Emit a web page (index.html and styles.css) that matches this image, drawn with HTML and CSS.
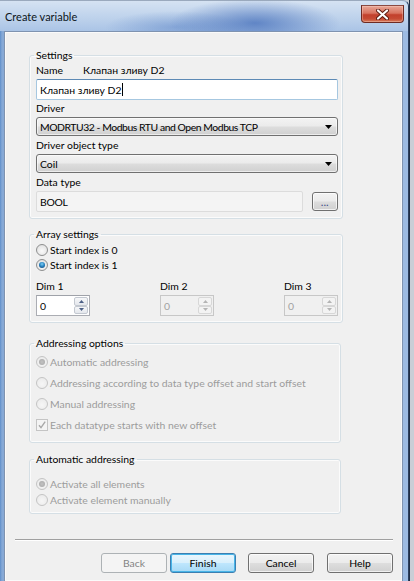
FILE: index.html
```html
<!DOCTYPE html>
<html lang="en">
<head>
<meta charset="utf-8">
<title>Create variable</title>
<link rel="stylesheet" href="styles.css">
</head>
<body>
<div class="window">
  <div class="titlebar">
    <span class="title">Create variable</span>
    <span class="close" aria-label="Close">
      <svg width="13" height="11" viewBox="0 0 13 11"><path d="M2 1.5 L11 9.5 M11 1.5 L2 9.5" stroke="#5a1a10" stroke-width="4" stroke-linecap="round"/><path d="M2 1.5 L11 9.5 M11 1.5 L2 9.5" stroke="#fff" stroke-width="2.2" stroke-linecap="round"/></svg>
    </span>
  </div>
  <div class="client">
    <fieldset class="group g-settings">
      <legend>Settings</legend>
      <div class="name-row"><span class="name-lbl">Name</span><span>Клапан зливу D2</span></div>
      <div class="textbox">Клапан зливу D2<span class="caret"></span></div>
      <div class="lbl">Driver</div>
      <div class="combo"><span class="combo-text caps">MODRTU32 - Modbus RTU and Open Modbus TCP</span><svg width="7" height="4" viewBox="0 0 7 4"><path d="M0 0 H7 L3.5 4 Z" fill="#000"/></svg></div>
      <div class="lbl">Driver object type</div>
      <div class="combo"><span class="combo-text">Coil</span><svg width="7" height="4" viewBox="0 0 7 4"><path d="M0 0 H7 L3.5 4 Z" fill="#000"/></svg></div>
      <div class="lbl">Data type</div>
      <div class="data-row">
        <div class="readonly">BOOL</div>
        <div class="btn dots">...</div>
      </div>
    </fieldset>

    <fieldset class="group g-array">
      <legend>Array settings</legend>
      <div class="opt"><span class="radio"></span>Start index is 0</div>
      <div class="opt"><span class="radio on"></span>Start index is 1</div>
      <div class="dims">
        <div class="dim">
          <div class="lbl">Dim 1</div>
          <div class="spin"><span class="spin-val">0</span><span class="spin-btns"><span class="sb"><svg width="5" height="3" viewBox="0 0 5 3"><path d="M0 3 H5 L2.5 0 Z"/></svg></span><span class="sb"><svg width="5" height="3" viewBox="0 0 5 3"><path d="M0 0 H5 L2.5 3 Z"/></svg></span></span></div>
        </div>
        <div class="dim">
          <div class="lbl">Dim 2</div>
          <div class="spin off"><span class="spin-val">0</span><span class="spin-btns"><span class="sb"><svg width="5" height="3" viewBox="0 0 5 3"><path d="M0 3 H5 L2.5 0 Z"/></svg></span><span class="sb"><svg width="5" height="3" viewBox="0 0 5 3"><path d="M0 0 H5 L2.5 3 Z"/></svg></span></span></div>
        </div>
        <div class="dim">
          <div class="lbl">Dim 3</div>
          <div class="spin off"><span class="spin-val">0</span><span class="spin-btns"><span class="sb"><svg width="5" height="3" viewBox="0 0 5 3"><path d="M0 3 H5 L2.5 0 Z"/></svg></span><span class="sb"><svg width="5" height="3" viewBox="0 0 5 3"><path d="M0 0 H5 L2.5 3 Z"/></svg></span></span></div>
        </div>
      </div>
    </fieldset>

    <fieldset class="group g-addr">
      <legend>Addressing options</legend>
      <div class="opt off"><span class="radio on"></span>Automatic addressing</div>
      <div class="opt off"><span class="radio"></span>Addressing according to data type offset and start offset</div>
      <div class="opt off"><span class="radio"></span>Manual addressing</div>
      <div class="opt off"><span class="check"><svg width="10" height="10" viewBox="0 0 10 10"><path d="M2 5.2 L4 7.6 L8.2 1.6" fill="none" stroke="#a8a8a8" stroke-width="1.4"/></svg></span>Each datatype starts with new offset</div>
    </fieldset>

    <fieldset class="group g-auto">
      <legend>Automatic addressing</legend>
      <div class="opt off"><span class="radio on"></span>Activate all elements</div>
      <div class="opt off"><span class="radio"></span>Activate element manually</div>
    </fieldset>

    <div class="separator"></div>

    <div class="buttons">
      <div class="btn wide disabled">Back</div>
      <div class="btn wide default">Finish</div>
      <div class="btn wide gap">Cancel</div>
      <div class="btn wide gap2">Help</div>
    </div>
  </div>
</div>
<div class="behind"></div>
</body>
</html>
```

FILE: styles.css
```css
* { box-sizing: border-box; }
html, body { margin: 0; padding: 0; }
body {
  width: 414px;
  height: 581px;
  overflow: hidden;
  display: flex;
  background: #cdd1d8;
  font-family: "Segoe UI", Lato, "Noto Sans", sans-serif;
  font-size: 10.4px;
  color: #000;
}

.window {
  width: 409px;
  height: 581px;
  flex: none;
  display: flex;
  flex-direction: column;
  background: linear-gradient(90deg, #5f8fcb 0, #86a9d6 2px, #9dbbe2 100%);
  border-right: 1px solid #2c3f5e;
  border-top: 1px solid #9aa9bd;
  border-top-right-radius: 6px;
}

.titlebar {
  height: 30px;
  flex: none;
  display: flex;
  justify-content: space-between;
  align-items: flex-start;
  border-top-right-radius: 6px;
  background:
    radial-gradient(ellipse 85px 24px at 255px 22px, rgba(50, 95, 178, 0.65), rgba(50, 95, 178, 0) 100%),
    radial-gradient(ellipse 70px 16px at 175px 26px, rgba(70, 115, 190, 0.4), rgba(70, 115, 190, 0) 100%),
    linear-gradient(#d5e2f2, #bcd1eb 60%, #aac4e6);
}
.title {
  margin: 9px 0 0 5px;
  font-size: 11px;
  line-height: 14px;
  color: #0c1420;
}
.close {
  margin: 4px 4px 0 0;
  width: 43px;
  height: 18px;
  display: flex;
  align-items: center;
  justify-content: center;
  border: 1px solid #6e2a22;
  border-top-color: #8a4a42;
  border-radius: 0 0 4px 4px;
  background: linear-gradient(#e8a797 0, #d8735f 45%, #c2402c 55%, #c64b34 80%, #d77d5d 100%);
  box-shadow: inset 0 0 0 1px rgba(255, 220, 210, 0.35);
}

.client {
  flex: 1;
  margin: 0 5px 0 4px;
  border: 1px solid #7f93b0;
  border-bottom: none;
  background: #f0f0f0;
  box-shadow: inset 0 0 0 1px #fafafa;
}

.group {
  margin: 0 0 0 24px;
  width: 314px;
  padding: 0 4px 0 6px;
  border: 1px solid #d5dfe5;
  border-radius: 3px;
  box-shadow: inset 0 0 0 1px #fbfbfb;
  min-width: 0;
}
.group legend {
  padding: 0 2px;
  margin-left: -2px;
  line-height: 14px;
  height: 14px;
}
.g-settings { margin-top: 16px; padding-bottom: 6px; }
.g-array { margin-top: 8px; padding-bottom: 6px; }
.g-addr { margin-top: 13px; width: 312px; padding-bottom: 7px; }
.g-auto { margin-top: 9px; width: 312px; padding-bottom: 5px; }

.lbl { height: 15px; line-height: 15px; }
.name-row { margin-top: 1px; height: 14px; line-height: 14px; display: flex; }
.name-lbl { width: 47px; }

.textbox {
  margin-top: 2px;
  height: 21px;
  display: flex;
  align-items: center;
  padding-left: 3px;
  background: #fff;
  border: 1px solid #a6c7e0;
  border-top-color: #5d8ab5;
  border-radius: 2px;
}
.caret { width: 1px; height: 13px; background: #000; margin-left: 1px; }

.g-settings .lbl { margin-top: 2px; }
.g-settings .textbox + .lbl { margin-top: 1px; }

.combo {
  margin-top: 1px;
  height: 19px;
  display: flex;
  align-items: center;
  justify-content: space-between;
  padding: 0 5px 0 3px;
  border: 1px solid #707070;
  border-radius: 3px;
  background: linear-gradient(#f3f3f3 0, #ebebeb 48%, #dddddd 52%, #d0d0d0 100%);
  box-shadow: inset 0 0 0 1px rgba(255, 255, 255, 0.6);
}
.combo-text.caps { letter-spacing: -0.45px; }

.data-row {
  margin-top: 1px;
  display: flex;
  align-items: center;
  gap: 9px;
}
.readonly {
  width: 267px;
  height: 21px;
  display: flex;
  align-items: center;
  padding-left: 3px;
  background: #f4f4f4;
  border: 1px solid #dcdcdc;
  border-radius: 2px;
  letter-spacing: -0.3px;
}

.btn {
  display: flex;
  align-items: center;
  justify-content: center;
  border: 1px solid #707070;
  border-radius: 3px;
  background: linear-gradient(#f3f3f3 0, #ebebeb 48%, #dddddd 52%, #d0d0d0 100%);
  box-shadow: inset 0 0 0 1px rgba(255, 255, 255, 0.7);
}
.dots {
  width: 26px;
  height: 19px;
  color: #3b4a8a;
  font-weight: bold;
  font-size: 9px;
  letter-spacing: 0.5px;
  padding-top: 2px;
}

.opt {
  height: 15px;
  display: flex;
  align-items: center;
  gap: 2px;
}
.g-array .opt:first-of-type { margin-top: 1px; }
.opt.off { color: #9c9c9c; }
.g-addr .opt { height: 21px; }
.g-addr .opt:first-of-type { margin-top: 1px; }
.g-auto .opt { height: 16px; }
.g-auto .opt:first-of-type { margin-top: 10px; }

.radio {
  width: 12px;
  height: 12px;
  border-radius: 50%;
  border: 1px solid #8e8f8f;
  background: radial-gradient(circle at 50% 60%, #fafafa 0, #e8e8e8 60%, #d4d4d4 100%);
  display: flex;
  align-items: center;
  justify-content: center;
  flex: none;
}
.radio.on::after {
  content: "";
  width: 6px;
  height: 6px;
  border-radius: 50%;
  background: radial-gradient(circle at 50% 35%, #7fd0f5 0, #2a86c4 45%, #0d3a6a 100%);
}
.off .radio {
  border-color: #c4c4c4;
  background: radial-gradient(circle at 50% 60%, #f6f6f6 0, #ececec 70%, #e2e2e2 100%);
}
.off .radio.on::after {
  background: radial-gradient(circle, #c2c2c2 0, #a6a6a6 100%);
}
.check {
  width: 12px;
  height: 12px;
  border: 1px solid #c4c4c4;
  background: #f4f4f4;
  display: flex;
  align-items: center;
  justify-content: center;
  flex: none;
}

.dims {
  margin-top: 7px;
  display: flex;
  justify-content: space-between;
}
.dim .lbl { margin: 0; }
.spin {
  margin-top: 1px;
  width: 54px;
  height: 21px;
  display: flex;
  border: 1px solid #abadb3;
  border-top-color: #9fa2a9;
  background: #fff;
}
.spin-val {
  flex: 1;
  padding-left: 3px;
  display: flex;
  align-items: center;
}
.spin-btns {
  width: 15px;
  display: flex;
  flex-direction: column;
  padding: 1px 1px 1px 0;
}
.sb {
  flex: 1;
  display: flex;
  align-items: center;
  justify-content: center;
  border: 1px solid #c3c8d0;
  border-radius: 2px;
  background: linear-gradient(#f6f7f9, #e4e7ec);
  fill: #4b5f86;
}
.spin.off {
  background: #f0f0f0;
  border-color: #c7c7c7;
  color: #a0a0a0;
}
.spin.off .sb {
  border-color: #d7d7d7;
  background: #f3f3f3;
  fill: #b4b4b4;
}

.separator {
  margin: 25px 0 0 10px;
  width: 378px;
  height: 2px;
  border-top: 1px solid #a0a0a0;
  border-bottom: 1px solid #ffffff;
}

.buttons {
  margin: 12px 0 0 96px;
  display: flex;
}
.wide {
  width: 66px;
  height: 20px;
}
.btn.default {
  margin-left: 3px;
  border-color: #3c7fb1;
  background: linear-gradient(#eaf6fd 0, #d9f0fc 48%, #bee6fd 52%, #a7d9f5 100%);
  box-shadow: inset 0 0 0 1px #48b5e8;
}
.btn.disabled {
  color: #838383;
  border-color: #adb2b5;
  background: #f4f4f4;
  box-shadow: none;
}
.btn.gap { margin-left: 12px; }
.btn.gap2 { margin-left: 13px; }

.behind {
  flex: 1;
  background: linear-gradient(90deg, #1f2d45 0, #1f2d45 1px, #c9ced6 1px);
}
```
